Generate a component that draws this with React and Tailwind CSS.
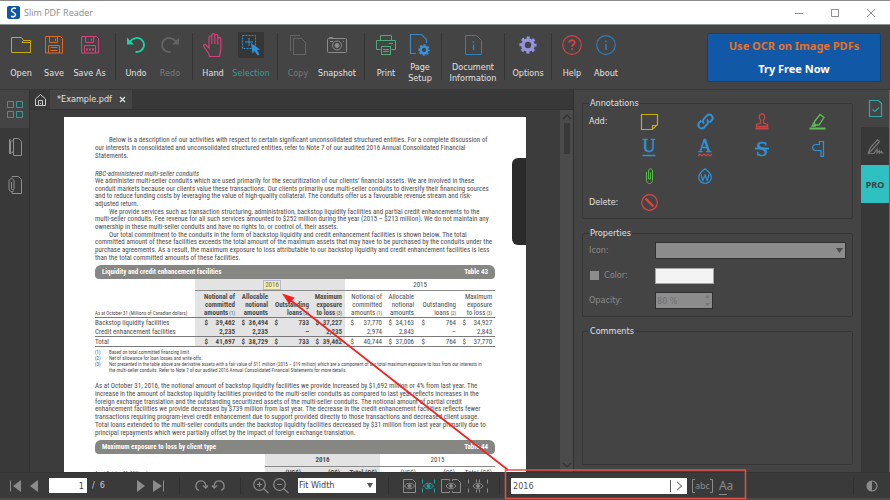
import clsx from 'clsx';

function Icon({ w, h, className, children }) {
  return (
    <svg width={w} height={h} viewBox={`0 0 ${w} ${h}`} fill="none" stroke="currentColor" aria-hidden="true" className={clsx('shrink-0 overflow-visible', className)}>
      {children}
    </svg>
  );
}

const Folder = () => (
  <Icon w={20} h={16} className="text-[#c4ac18]">
    <path d="M.5.5h10l2 3h7v12H.5zM12.5 3.5l-1.500 2h8" />
  </Icon>
);

const Floppy = ({ dots, className }) => (
  <Icon w={18} h={18} className={className}>
    <path d="M.5.5h15l2 2v14.500h-17z" />
    <path d="M4.500.5v6h8v-6M10.500 2.500v2.500" />
    <path d="M3.500 17V9.500h11V17" />
    {dots ? <path d="M5 13.500h8" strokeWidth="2" strokeDasharray="2 1" /> : <path d="M5.500 11.500h7M5.500 14.500h7" />}
  </Icon>
);

const Undo = () => (
  <Icon w={20} h={18} className="text-[#18d3a2]">
    <path d="M4 5.500C7 1.500 12.500.8 15.800 3.800c3.500 3.300 2.800 9.200-1.800 11.400-1.500.7-3 .9-4.500.8" strokeWidth="1.800" />
    <path d="M1 1.500v7h7z" fill="currentColor" stroke="none" />
  </Icon>
);

const Redo = () => (
  <Icon w={20} h={18} className="text-[#646464]">
    <path d="M16 5.500C13 1.500 7.500.8 4.200 3.800.7 7.100 1.400 13 6 15.200c1.500.7 3 .9 4.500.8" strokeWidth="1.800" />
    <path d="M19 1.500v7h-7z" fill="currentColor" stroke="none" />
  </Icon>
);

const Hand = () => (
  <Icon w={20} h={24} className="text-[#d6407c]">
    <path d="M6.500 23.500c0-2-1-3.500-2.500-5.500L.8 13.300c-.8-1.500 1.200-2.500 2.400-1.200L6 15V4.500c0-2 2.800-2 2.800 0V11 2.300c0-2.200 3-2.200 3 0V11 3c0-2 3-2 3 0v8.500V5.800c0-2 3-2 3 0V16c0 3-1.300 4.500-1.300 7.500z" strokeWidth="1.200" />
  </Icon>
);

const Selection = () => (
  <Icon w={22} h={24} className="text-[#2f8fd6]">
    <rect x="2.500" y="2.500" width="13" height="13" strokeDasharray="2 1" />
    <path d="M9 5v8M5 9h8" />
    <path d="M11 10l1.500 10.500 2.300-2.300 2.700 4.300 2-1.200-2.500-4.300 3.200-.6z" fill="currentColor" stroke="none" />
  </Icon>
);

const Copy = () => (
  <Icon w={18} h={20} className="text-[#646464]">
    <path d="M1.500 16V.5h9.500M4.500 3.500h8l4 4v12h-12z" />
  </Icon>
);

const Camera = () => (
  <Icon w={20} h={16} className="text-[#8b8b8b]">
    <rect x=".5" y="1.500" width="19" height="14" rx="1" />
    <path d="M2.500 1V.5h3V1M3 4.500h3M16 4.500h1" />
    <circle cx="10" cy="8.500" r="4.500" />
    <circle cx="10" cy="8.500" r="2" fill="currentColor" />
  </Icon>
);

const Printer = () => (
  <Icon w={20} h={20} className="text-[#4faa7d]">
    <path d="M4.500 5V.5h11V5M4.500 14.500h-4v-9h19v9h-4" />
    <rect x="5.500" y="11.500" width="9" height="8" />
    <path d="M7 14.500h6M7 16.500h6M13 8.500h4" />
  </Icon>
);

const Gear = ({ size, className }) => (
  <svg width={size} height={size} viewBox="0 0 18 18" fill="none" stroke="currentColor" aria-hidden="true" className={className}>
    <circle cx="9" cy="9" r="5" strokeWidth="3.600" />
    <circle cx="9" cy="9" r="7.300" strokeWidth="2.600" strokeDasharray="3.100 2.633" strokeDashoffset="1.500" />
  </svg>
);

const PageSetup = () => (
  <span className="relative block h-[22px] w-5">
    <Icon w={20} h={22} className="text-[#3f86bf]">
      <path d="M6 19.500H.5V.5h11l5 5V9" strokeWidth="1.200" />
    </Icon>
    <Gear size={12} className="absolute right-0 bottom-0 text-[#3a92dc]" />
  </span>
);

const DocInfo = () => (
  <Icon w={17} h={20} className="text-[#2d7fbd]">
    <path d="M.5.5h11l5 5v14H.5z" />
    <path d="M8.500 6v2M8.500 9.500V15" strokeWidth="1.500" />
  </Icon>
);

const Help = () => (
  <Icon w={20} h={20} className="text-[#d34545]">
    <circle cx="10" cy="10" r="9.300" strokeWidth="1.200" />
    <path d="M7.300 7.800C7.300 4 13 4.300 12.700 7.800c-.2 1.800-2.600 1.800-2.600 4M10.100 13.300v1.700" strokeWidth="1.800" />
  </Icon>
);

const About = () => (
  <Icon w={20} h={20} className="text-[#2d7fbd]">
    <circle cx="10" cy="10" r="9.300" strokeWidth="1.200" />
    <path d="M10 5.500v1.800M10 8.800V15" strokeWidth="1.500" />
  </Icon>
);

const toolGroups = [
  [
    { label: 'Open', icon: <Folder />, width: 'w-[38px]' },
    { label: 'Save', icon: <Floppy className="text-[#e0691c]" />, width: 'w-7' },
    { label: 'Save As', icon: <Floppy dots className="text-[#d6407c]" />, width: 'w-[43px]' },
  ],
  [
    { label: 'Undo', icon: <Undo />, width: 'w-8' },
    { label: 'Redo', icon: <Redo />, width: 'w-9', disabled: true },
  ],
  [
    { label: 'Hand', icon: <Hand />, width: 'w-8' },
    { label: 'Selection', icon: <Selection />, width: 'w-11', active: true },
  ],
  [
    { label: 'Copy', icon: <Copy />, width: 'w-8', disabled: true },
    { label: 'Snapshot', icon: <Camera />, width: 'w-[46px]' },
  ],
  [
    { label: 'Print', icon: <Printer />, width: 'w-[34px]' },
    { label: 'Page Setup', icon: <PageSetup />, width: 'w-[34px]' },
  ],
  [{ label: 'Document Information', icon: <DocInfo />, width: 'w-[54px]' }],
  [{ label: 'Options', icon: <Gear size={18} className="text-[#9792e0]" />, width: 'w-[38px]' }],
  [
    { label: 'Help', icon: <Help />, width: 'w-8' },
    { label: 'About', icon: <About />, width: 'w-9' },
  ],
];

function TitleBar() {
  return (
    <header className="flex h-[25px] shrink-0 items-center border-t border-b border-t-[#8a8a8a] border-b-[#8d9592] bg-white pl-[7px]">
      <span className="flex h-[13px] w-[13px] items-center justify-center rounded-xs bg-[#0f56a4] text-white">
        <Icon w={7} h={11}>
          <path d="M6 1.500C3.500.5 1.500 1.500 1.500 3.300c0 2.200 4 2 4 4.400 0 1.800-2 2.600-4.500 1.600" strokeWidth="1.500" />
        </Icon>
      </span>
      <h1 className="ml-1 font-['Open_Sans',sans-serif] text-[9px] text-[#8c8c8c]">Slim PDF Reader</h1>
      <div className="mr-px ml-auto flex text-[#8f8f8f]">
        <button aria-label="Minimize" className="flex h-5 w-9 items-center justify-center"><Icon w={8} h={8}><path d="M0 4.500h8" /></Icon></button>
        <button aria-label="Maximize" className="flex h-5 w-9 items-center justify-center"><Icon w={8} h={8}><path d="M.5.5h7v7h-7z" /></Icon></button>
        <button aria-label="Close" className="flex h-5 w-9 items-center justify-center"><Icon w={8} h={8}><path d="M0 0l8 8M8 0L0 8" /></Icon></button>
      </div>
    </header>
  );
}

function ToolButton({ label, icon, width, active, disabled }) {
  return (
    <button
      disabled={disabled}
      className={clsx('flex shrink-0 flex-col items-center', width, active ? 'text-[#2aa198]' : disabled ? 'text-[#7b7b7b]' : 'text-[#e2e2e2]')}
    >
      <span className={clsx('flex h-[26px] w-[26px] items-center justify-center', active && 'bg-[#363636]')}>{icon}</span>
      <span className="mt-1 flex h-[22px] items-center justify-center text-center leading-[11px]">{label}</span>
    </button>
  );
}

function Toolbar() {
  return (
    <div className="flex h-[65px] shrink-0 items-start border-b border-[#373737] bg-[#444] pt-[7px] pr-[9px] pl-[2px]">
      {toolGroups.map((group, i) => (
        <div key={group[0].label} className="flex">
          {i > 0 && <span className="mx-1 mt-px h-[47px] w-px bg-[#343434]" />}
          {group.map(t => <ToolButton key={t.label} {...t} />)}
        </div>
      ))}
      <a href="#ocr" className="mt-px ml-auto flex h-[49px] w-[174px] flex-col items-center justify-between rounded-xs border border-[#1c3f6b] bg-[#1159a7] py-1.5 font-['Noto_Sans',sans-serif] text-[11px] leading-[12px] font-bold">
        <span className="text-[#ea701a]">Use OCR on Image PDFs</span>
        <span className="text-white">Try Free Now</span>
      </a>
    </div>
  );
}

function LeftBar() {
  return (
    <nav className="flex w-[30px] shrink-0 flex-col border-r border-[#303030] bg-[#393939] text-[#8e8e8e]">
      <button aria-label="Thumbnails" className="flex h-[38px] items-center justify-center bg-[#444] text-[#2aa198]">
        <Icon w={16} h={17}>
          <path d="M.5.5h6v6h-6zM9.500.5h6v6h-6zM.5 10.500h6v6h-6zM9.500 10.500h6v6h-6z" />
        </Icon>
      </button>
      <button aria-label="Bookmarks" className="flex h-[38px] items-center justify-center">
        <Icon w={14} h={18}>
          <path d="M3 15.500H1.500V1.500h1M5.500.5h5l3 3v14h-8zM5.500 3h-3v12.500l3-2" />
        </Icon>
      </button>
      <button aria-label="Attachments" className="flex h-[38px] items-center justify-center">
        <Icon w={14} h={18}>
          <path d="M4 1.500V.5h6.500l3 3v14H4V16" />
          <path d="M3.500 6v6.500c0 1.800 2.500 1.800 2.500 0V5c0-3-5-3-5 0v8c0 3 4 3 5 1.500" />
        </Icon>
      </button>
    </nav>
  );
}

function TabStrip() {
  return (
    <div className="flex h-5 shrink-0 items-stretch border-b border-[#323232] bg-[#383838]">
      <button aria-label="Home" className="flex w-5 items-center justify-center text-[#c9c9c9]">
        <Icon w={11} h={12}>
          <path d="M.5 11.500V5l5-4.500 5 4.500v6.500zM3.500 11.500v-5h4v5M5 9.500h1" />
        </Icon>
      </button>
      <div className="flex w-[82px] items-center justify-between bg-[#444] pr-[7px] pl-[7px] text-[#e2e2e2]">
        <span>*Example.pdf</span>
        <button aria-label="Close tab" className="flex">
          <Icon w={5} h={5}><path d="M0 0l5 5M5 0L0 5" strokeWidth="1.200" /></Icon>
        </button>
      </div>
    </div>
  );
}

const intro = [
  'Below is a description of our activities with respect to certain significant unconsolidated structured entities. For a complete discussion of',
  'our interests in consolidated and unconsolidated structured entities, refer to Note 7 of our audited 2016 Annual Consolidated Financial',
  'Statements.',
];

const conduits = [
  'We administer multi-seller conduits which are used primarily for the securitization of our clients’ financial assets. We are involved in these',
  'conduit markets because our clients value these transactions. Our clients primarily use multi-seller conduits to diversify their financing sources',
  'and to reduce funding costs by leveraging the value of high-quality collateral. The conduits offer us a favourable revenue stream and risk-',
  'adjusted return.',
  'We provide services such as transaction structuring, administration, backstop liquidity facilities and partial credit enhancements to the',
  'multi-seller conduits. Fee revenue for all such services amounted to $252 million during the year (2015 – $213 million). We do not maintain any',
  'ownership in these multi-seller conduits and have no rights to, or control of, their assets.',
  'Our total commitment to the conduits in the form of backstop liquidity and credit enhancement facilities is shown below. The total',
  'committed amount of these facilities exceeds the total amount of the maximum assets that may have to be purchased by the conduits under the',
  'purchase agreements. As a result, the maximum exposure to loss attributable to our backstop liquidity and credit enhancement facilities is less',
  'than the total committed amounts of these facilities.',
];

const changes = [
  'As at October 31, 2016, the notional amount of backstop liquidity facilities we provide increased by $1,692 million or 4% from last year. The',
  'increase in the amount of backstop liquidity facilities provided to the multi-seller conduits as compared to last year reflects increases in the',
  'foreign exchange translation and the outstanding securitized assets of the multi-seller conduits. The notional amount of partial credit',
  'enhancement facilities we provide decreased by $739 million from last year. The decrease in the credit enhancement facilities reflects fewer',
  'transactions requiring program-level credit enhancement due to support provided directly to those transactions and decreased client usage.',
  'Total loans extended to the multi-seller conduits under the backstop liquidity facilities decreased by $31 million from last year primarily due to',
  'principal repayments which were partially offset by the impact of foreign exchange translation.',
];

const facilityRows = [
  { name: 'Backstop liquidity facilities', values: ['$', '39,462', '$', '36,494', '$', '733', '$', '37,227', '$', '37,770', '$', '34,163', '$', '764', '$', '34,927'] },
  { name: 'Credit enhancement facilities', values: ['', '2,235', '', '2,235', '', '–', '', '2,235', '', '2,974', '', '2,843', '', '–', '', '2,843'] },
  { name: 'Total', total: true, values: ['$', '41,697', '$', '38,729', '$', '733', '$', '39,462', '$', '40,744', '$', '37,006', '$', '764', '$', '37,770'] },
];

const facilityHeads = [
  ['Notional of', 'committed', 'amounts', '(1)'],
  ['Allocable', 'notional', 'amounts'],
  ['', 'Outstanding', 'loans', '(2)'],
  ['Maximum', 'exposure', 'to loss', '(3)'],
];

function Caption({ title, number }) {
  return (
    <div className="flex h-[14px] items-center justify-between rounded-tl-md rounded-tr-md rounded-br-sm rounded-bl-sm bg-[#868683] px-[7px] font-bold text-white">
      <span>{title}</span>
      <span>{number}</span>
    </div>
  );
}

function Lines({ lines, indents = [] }) {
  return lines.map((line, i) => (
    <span key={line} className={clsx('flex items-center leading-[7px]', indents.includes(i) && 'pl-[14px]')}>{line}</span>
  ));
}

function FacilitiesTable() {
  return (
    <table className="w-full table-fixed border-separate border-spacing-0 leading-[8px] whitespace-nowrap [&_td]:p-0 [&_th]:p-0">
      <colgroup>
        <col className="w-[100px]" />
        <col className="w-[13px]" /><col className="w-[27px]" />
        <col className="w-[10px]" /><col className="w-[23px]" />
        <col className="w-[10px]" /><col className="w-[31px]" />
        <col className="w-[10px]" /><col className="w-[26px]" />
        <col className="w-[9px]" /><col className="w-[28px]" />
        <col className="w-[10px]" /><col className="w-[22px]" />
        <col className="w-[11px]" /><col className="w-[31px]" />
        <col className="w-[10px]" /><col className="w-[29px]" />
      </colgroup>
      <thead>
        <tr className="h-3">
          <td />
          <th colSpan={8} className="border-b border-[#8a8a8a] bg-[#e3e3e3] font-normal">
            <span className="ml-1 inline-block bg-[#f1edb4] px-px text-[#77743c] outline outline-[#b9b6dd]">2016</span>
          </th>
          <th colSpan={8} className="border-b border-[#8a8a8a] font-normal">2015</th>
        </tr>
        <tr className="h-[27px] align-bottom">
          <th className="border-b border-[#7a7a7a] text-left text-[5px] font-normal">As at October 31 (Millions of Canadian dollars)</th>
          {[true, false].map(current => facilityHeads.map(([a, b, c, note], i) => (
            <th key={c} colSpan={2} className={clsx('border-b border-[#7a7a7a] text-right', current ? 'bg-[#e3e3e3] font-bold' : 'font-normal')}>
              <div className={clsx(i === 3 && 'pr-[3px]')}>
                {a}<br />{b}<br />{c}{note && <span className="text-[5px] font-normal"> {note}</span>}
              </div>
            </th>
          )))}
        </tr>
      </thead>
      <tbody>
        {facilityRows.map(row => (
          <tr key={row.name} className={row.total ? 'h-[11px]' : 'h-[9px]'}>
            <td className={clsx(row.total && 'border-t border-b border-[#7a7a7a]')}>{row.name}</td>
            {row.values.map((v, i) => (
              <td
                key={i}
                className={clsx('text-right', i < 8 && 'bg-[#e3e3e3] font-bold', row.total && 'border-t border-b border-[#7a7a7a]')}
              >
                <div className={clsx(i % 8 === 7 && 'pr-[3px]')}>{v}</div>
              </td>
            ))}
          </tr>
        ))}
      </tbody>
    </table>
  );
}

function ClientTable() {
  return (
    <table className="w-full table-fixed border-separate border-spacing-0 leading-[8px] whitespace-nowrap [&_td]:p-0 [&_th]:p-0">
      <colgroup>
        <col className="w-[170px]" />
        <col className="w-[39px]" /><col className="w-[39px]" /><col className="w-[37px]" />
        <col className="w-[39px]" /><col className="w-[39px]" /><col className="w-[37px]" />
      </colgroup>
      <thead>
        <tr className="h-[13px]">
          <td />
          <th colSpan={3} className="border-b border-[#8a8a8a] bg-[#e3e3e3] font-bold">2016</th>
          <th colSpan={3} className="border-b border-[#8a8a8a] font-normal">2015</th>
        </tr>
        <tr className="h-3">
          <th className="text-left text-[5px] font-normal">As at October 31 (Millions)</th>
          {['(US$)', '(C$)', 'Total (C$)'].map(h => <th key={h} className="bg-[#e3e3e3] text-right font-bold"><div className="pr-[3px]">{h}</div></th>)}
          {['(US$)', '(C$)', 'Total (C$)'].map(h => <th key={h} className="text-right font-normal"><div className="pr-[3px]">{h}</div></th>)}
        </tr>
      </thead>
    </table>
  );
}

const footnotes = [
  ['(1)', 'Based on total committed financing limit.'],
  ['(2)', 'Net of allowance for loan losses and write-offs.'],
  ['(3)', 'Not presented in the table above are derivative assets with a fair value of $11 million (2015 – $19 million) which are a component of our total maximum exposure to loss from our interests in'],
  ['', 'the multi-seller conduits. Refer to Note 7 of our audited 2016 Annual Consolidated Financial Statements for more details.'],
];

function PdfPage() {
  return (
    <article className="relative w-[462px] shrink-0 overflow-hidden bg-white pt-5 pl-[31px] font-['Roboto_Condensed',Roboto,sans-serif] text-[7px] whitespace-nowrap text-[#4c4c4c]">
      <div className="w-[400px]">
        <p className="grid h-[23px] auto-rows-fr"><Lines lines={intro} indents={[0]} /></p>
        <section className="mt-2.5 grid h-[92px] auto-rows-fr">
          <h2 className="leading-[8px] italic">RBC-administered multi-seller conduits</h2>
          <Lines lines={conduits} indents={[4, 7]} />
        </section>
        <div className="mt-[3px]">
          <Caption title="Liquidity and credit enhancement facilities" number="Table 43" />
          <FacilitiesTable />
        </div>
        <ul className="mt-0.5 text-[5px] leading-[6px]">
          {footnotes.map(([mark, text]) => (
            <li key={text} className="flex"><span className="w-[14px] shrink-0">{mark}</span>{text}</li>
          ))}
        </ul>
        <p className="mt-2.5 grid h-[54px] auto-rows-fr"><Lines lines={changes} /></p>
        <div className="mt-[3px]">
          <Caption title="Maximum exposure to loss by client type" number="Table 44" />
          <ClientTable />
        </div>
      </div>
      <span className="absolute top-[41px] right-0 h-[87px] w-[14px] rounded-l-md bg-[#2b2b2b]" />
    </article>
  );
}

function DocumentView() {
  return (
    <section className="flex w-[543px] shrink-0 flex-col">
      <TabStrip />
      <div className="flex min-h-0 flex-1 bg-[#3c3c3c]">
        <div className="flex min-w-0 flex-1 overflow-hidden pt-[7px] pl-[34px]"><PdfPage /></div>
        <div className="flex w-[13px] flex-col items-center bg-[#4b4b4b] py-1 text-[#333]">
          <Icon w={8} h={5}><path d="M0 5l4-4 4 4" strokeWidth="1.500" /></Icon>
          <span className="mt-1 h-[31px] w-[6px] bg-[#383838]" />
          <Icon w={8} h={5} className="mt-auto"><path d="M0 0l4 4 4-4" strokeWidth="1.500" /></Icon>
        </div>
      </div>
    </section>
  );
}

const blue = 'text-[#2f93da]';

const annotationTools = [
  { label: 'Note', icon: <Icon w={17} h={16} className="text-[#c9ae10]"><path d="M.5.5h16v10l-5 5H.5zM11.500 15.500v-4h5" strokeWidth="1.200" /></Icon> },
  {
    label: 'Link',
    icon: (
      <Icon w={17} h={17} className={blue}>
        <path d="M7 10.500a3.400 3.400 0 0 1 0-4.800l3-3.200a3.400 3.400 0 0 1 4.800 4.800L12.500 9.500M10 6.500a3.400 3.400 0 0 1 0 4.800l-3 3.200a3.400 3.400 0 0 1-4.800-4.800L4.500 7.500" strokeWidth="1.900" />
      </Icon>
    ),
  },
  {
    label: 'Stamp',
    icon: (
      <Icon w={14} h={17} className="text-[#c94646]">
        <path d="M5.500 10V7C3.500 5 3.800.8 7 .8S10.500 5 8.500 7v3l4 1.500v2h-11v-2z" strokeWidth="1.300" />
        <path d="M.5 15.500h13" strokeWidth="2" />
      </Icon>
    ),
  },
  {
    label: 'Highlight',
    icon: (
      <Icon w={17} h={17} className="text-[#5fbe55]">
        <path d="M5.500 8.500L11 1.500 15 4.500 10 12H5.500zM5 9.500L3 13h4" strokeWidth="1.300" />
        <path d="M.5 15.500h16" strokeWidth="2" />
      </Icon>
    ),
  },
  {
    label: 'Underline',
    icon: (
      <Icon w={14} h={17} className={blue}>
        <text x="7" y="12" textAnchor="middle" fill="currentColor" strokeWidth=".5" className="font-['Liberation_Serif',serif] text-[18px]">U</text>
        <path d="M.5 15.500h13" strokeWidth="1.500" />
      </Icon>
    ),
  },
  {
    label: 'Squiggly',
    icon: (
      <Icon w={14} h={17} className={blue}>
        <text x="7" y="12" textAnchor="middle" fill="currentColor" strokeWidth=".5" className="font-['Liberation_Serif',serif] text-[18px]">A</text>
        <path d="M0 16l2-2 2 2 2-2 2 2 2-2 2 2 2-2" strokeWidth="1.200" className="stroke-[#c94646]" />
      </Icon>
    ),
  },
  {
    label: 'Strikeout',
    icon: (
      <Icon w={14} h={17} className={blue}>
        <text x="7" y="16" textAnchor="middle" fill="currentColor" strokeWidth=".5" className="font-['Liberation_Serif',serif] text-[22px]">S</text>
        <path d="M0 8.500h14" strokeWidth="1.800" />
      </Icon>
    ),
  },
  { label: 'Paragraph', icon: <Icon w={12} h={16} className={blue}><path d="M11.500.5v15h-2.500V9.500H4c-4.500 0-4.500-6 0-6h3.500V.5z" strokeWidth="1.200" /></Icon> },
  { label: 'Attach', icon: <Icon w={7} h={16} className="text-[#58b94c]"><path d="M4.500 4.500v6.500h-2V3c0-3 4-3 4 0v9.500c0 4-6 4-6 0V4" /></Icon> },
  {
    label: 'Watermark',
    icon: (
      <Icon w={14} h={16} className={blue}>
        <path d="M7 .8c3 2.200 6.300 4.700 6.300 8.200 0 8.400-12.600 8.400-12.600 0C.7 5.500 4 3 7 .8z" strokeWidth="1.200" />
        <path d="M3 6.500l1.800 6L7 7l2.200 5.500 1.800-6" strokeWidth="1.200" />
      </Icon>
    ),
  },
];

function Group({ title, className, children }) {
  return (
    <fieldset className={clsx('min-w-0 rounded-xs border border-[#363636] px-1.5', className)}>
      <legend className="px-px leading-[10px]">{title}</legend>
      {children}
    </fieldset>
  );
}

function AnnotationPanel() {
  return (
    <aside className="flex min-w-0 flex-1 flex-col gap-[9px] border-l border-[#303030] bg-[#444] px-2 pt-2 pb-[7px] text-[#e0e0e0]">
      <Group title="Annotations" className="pb-0.5">
        <div className="grid auto-rows-[27px] grid-cols-[32px_repeat(4,1fr)] items-center">
          <span>Add:</span>
          {annotationTools.map((t, i) => (
            <button key={t.label} aria-label={t.label} className={clsx('flex justify-center', i % 4 === 0 && 'col-start-2')}>{t.icon}</button>
          ))}
          <span className="col-start-1">Delete:</span>
          <button aria-label="Delete" className="flex justify-center">
            <Icon w={17} h={17} className="text-[#d84848]">
              <circle cx="8.500" cy="8.500" r="7.800" strokeWidth="1.200" />
              <path d="M4.500 4.500l8 8" strokeWidth="2.400" />
            </Icon>
          </button>
        </div>
      </Group>

      <Group title="Properties" className="pb-[3px]">
        <div className="grid auto-rows-[25px] grid-cols-[66px_1fr] items-center text-[#8b8b8b]">
          <label htmlFor="icon">Icon:</label>
          <div className="relative">
            <select id="icon" disabled className="block h-[17px] w-full appearance-none border border-[#303030] bg-[#8c8c8c]" />
            <Icon w={7} h={5} className="absolute top-[6px] right-[3px] text-[#4a4a4a]"><path d="M0 0h7L3.500 5z" fill="currentColor" stroke="none" /></Icon>
          </div>
          <label className="flex items-center gap-[5px]">
            <input type="checkbox" disabled className="ml-px h-[9px] w-[9px] appearance-none bg-[#8c8c8c]" />
            Color:
          </label>
          <button aria-label="Pick color" disabled className="h-4 w-[59px] border border-[#a5a5a5] bg-[#f3f3f3]" />
          <label htmlFor="opacity">Opacity:</label>
          <div className="relative w-[58px]">
            <input id="opacity" disabled defaultValue="80 %" className="block h-[17px] w-full border border-[#303030] bg-[#8c8c8c] px-px text-[#6f6f6f]" />
            <Icon w={5} h={11} className="absolute top-[3px] right-[3px] text-[#777]">
              <path d="M0 3l2.500-3L5 3zM0 8h5l-2.500 3z" fill="currentColor" stroke="none" />
            </Icon>
          </div>
        </div>
      </Group>

      <Group title="Comments" className="flex-1" />
    </aside>
  );
}

function RightBar() {
  return (
    <nav className="flex w-[29px] shrink-0 flex-col border-r border-[#6a6a6a] bg-[#383838]">
      <button aria-label="Annotations" className="flex h-[37px] items-center justify-center bg-[#444] text-[#2fa8a4]">
        <Icon w={13} h={17}><path d="M.5.5h9l3 3v13H.5zM3.500 9.500l2.500 2 4-4" strokeWidth="1.200" /></Icon>
      </button>
      <button aria-label="Sign" className="flex h-[38px] items-center justify-center text-[#777]">
        <Icon w={17} h={15}>
          <path d="M1 14.500L3.500 8.500 10.500.8l2 1.700-7 8zM1 14.500h6l3-4.500v4l2.500-2.500v2.500l2-1.500.5 1.500h1.500" strokeWidth="1.200" />
        </Icon>
      </button>
      <button className="h-[38px] bg-[#2fc0c1] font-['Noto_Sans',sans-serif] text-[9px] font-bold text-[#3a4646]">PRO</button>
    </nav>
  );
}

const Eye = ({ x }) => (
  <>
    <path d={`M${x} 8c2.500-3.700 7.500-3.700 10 0-2.500 3.700-7.500 3.700-10 0z`} />
    <circle cx={x + 5} cy="8" r="1.500" fill="currentColor" />
  </>
);

function BarButton({ label, width, className, children }) {
  return <button aria-label={label} className={clsx('flex h-4 shrink-0 items-center justify-center', width, className)}>{children}</button>;
}

const BarSeparator = () => <span className="h-[18px] w-px shrink-0 bg-[#2f2f2f]" />;

function StatusBar() {
  return (
    <footer className="flex h-7 shrink-0 items-center border-t border-b-2 border-t-[#333] border-b-[#4d4a4a] bg-[#3a3a3a] pl-1.5 text-[#8b8b8b]">
      <BarButton label="First page" width="w-5"><Icon w={12} h={12}><path d="M.5.5v11" /><path d="M11 0v12L3 6z" fill="currentColor" stroke="none" /></Icon></BarButton>
      <BarButton label="Previous page" width="w-4"><Icon w={8} h={12}><path d="M8 0v12L0 6z" fill="currentColor" stroke="none" /></Icon></BarButton>
      <input aria-label="Page" defaultValue="1" className="ml-[7px] h-[15px] w-[38px] bg-white pr-[3px] text-right text-[#444]" />
      <span className="ml-[5px] w-[39px] shrink-0 text-[#ccc]">/&nbsp; 6</span>
      <BarButton label="Next page" width="w-5"><Icon w={8} h={12}><path d="M0 0v12l8-6z" fill="currentColor" stroke="none" /></Icon></BarButton>
      <BarButton label="Last page" width="w-4"><Icon w={12} h={12}><path d="M10.500.5v11" /><path d="M0 0v12l9-6z" fill="currentColor" stroke="none" /></Icon></BarButton>
      <span className="w-3" />
      <BarSeparator />
      <BarButton label="Rotate clockwise" width="w-[18px]" className="ml-3">
        <Icon w={12} h={11}><path d="M4 10.500C-1 8.500.5.8 6 .8c3 0 4.800 2.200 4.800 5.700M8 5.500l2.800 2.500L13 5.500" strokeWidth="1.300" /></Icon>
      </BarButton>
      <BarButton label="Rotate counterclockwise" width="w-[18px]">
        <Icon w={12} h={11}><path d="M8 10.500C13 8.500 11.500.8 6 .8 3 .8 1.200 3 1.200 6.500M-1 5.500L1.200 8 4 5.500" strokeWidth="1.300" /></Icon>
      </BarButton>
      <span className="w-3" />
      <BarSeparator />
      <BarButton label="Zoom in" width="w-5" className="ml-2.5">
        <Icon w={16} h={15}><circle cx="6.500" cy="6.500" r="5.800" strokeWidth="1.200" /><path d="M10.500 10.500l5 4.500M6.500 4v5M4 6.500h5" strokeWidth="1.200" /></Icon>
      </BarButton>
      <BarButton label="Zoom out" width="w-5">
        <Icon w={16} h={15}><circle cx="6.500" cy="6.500" r="5.800" strokeWidth="1.200" /><path d="M10.500 10.500l5 4.500M4 6.500h5" strokeWidth="1.200" /></Icon>
      </BarButton>
      <div className="relative ml-[7px] shrink-0">
        <select aria-label="Zoom" className="block h-[15px] w-[78px] appearance-none bg-white pl-px text-[#444]"><option>Fit Width</option></select>
        <Icon w={6} h={5} className="pointer-events-none absolute top-[5px] right-[3px] text-[#555]"><path d="M0 0h6L3 5z" fill="currentColor" stroke="none" /></Icon>
      </div>
      <span className="w-3" />
      <BarSeparator />
      <BarButton label="Single page" width="w-5" className="ml-2.5"><Icon w={13} h={16}><path d="M.5 1.500h9l3 3v10H.5z" /><Eye x={1.5} /></Icon></BarButton>
      <BarButton label="Continuous" width="w-[19px]" className="text-[#23a3a3]"><Icon w={13} h={16}><path d="M.5 1.500v4M.5 10.500v4M12.500 1.500v4M12.500 10.500v4" /><Eye x={1.5} /></Icon></BarButton>
      <BarButton label="Facing pages" width="w-[26px]"><Icon w={20} h={16}><path d="M8.500 3V1.500h-8v13h8V13M11.500 3V1.500h5l3 3v10h-8V13" /><Eye x={5} /></Icon></BarButton>
      <BarButton label="Continuous facing" width="w-7"><Icon w={20} h={16}><path d="M.5 1.500v4M.5 10.500v4M19.500 1.500v4M19.500 10.500v4M8.500 1.500v3M11.500 1.500v3M8.500 11.500v3M11.500 11.500v3" /><Eye x={5} /></Icon></BarButton>
      <span className="w-[7px]" />
      <BarSeparator />
      <div className="ml-[11px] flex h-4 w-44 shrink-0 items-center bg-white">
        <input aria-label="Find" defaultValue="2016" className="h-4 w-[159px] bg-transparent pl-0.5 text-[#555]" />
        <span className="h-3 w-px bg-[#555]" />
        <BarButton label="Find next" width="w-4"><Icon w={5} h={8}><path d="M0 0l4.500 4L0 8" strokeWidth="1.200" /></Icon></BarButton>
      </div>
      <button aria-label="Whole word" className="ml-[5px] flex h-3.5 shrink-0 items-center">
        <Icon w={3} h={14}><path d="M3 .5H.5v13H3" /></Icon>
        <span className="font-['Noto_Sans',sans-serif] text-[9px] leading-[12px]">abc</span>
        <Icon w={3} h={14}><path d="M0 .5h2.500v13H0" /></Icon>
      </button>
      <button aria-label="Match case" className="ml-1.5 shrink-0 font-['Noto_Sans',sans-serif] text-[12px] leading-[14px]"><span className="border-b border-current">A</span>a</button>
      <span className="ml-auto" />
      <BarSeparator />
      <BarButton label="Contrast" width="w-9">
        <Icon w={12} h={12}><circle cx="6" cy="6" r="5" strokeWidth="1.200" /><path d="M6 1a5 5 0 0 0 0 10z" fill="currentColor" stroke="none" /></Icon>
      </BarButton>
    </footer>
  );
}

/* Red frame round the search box, with an arrow up to the first hit on the page */
function Callout() {
  return (
    <svg width="750" height="210" viewBox="0 0 750 210" fill="none" aria-hidden="true" className="pointer-events-none absolute bottom-0 left-0">
      <path d="M508 180L289 9" stroke="#f5201d" strokeWidth="1.600" />
      <path d="M282 3.500l12.500 4-5.500 6.500z" fill="#f5201d" />
      <rect x="505.500" y="180" width="240" height="28.500" stroke="#e2524b" strokeWidth="1.500" />
    </svg>
  );
}

export default function App() {
  return (
    <div className="relative flex h-screen flex-col overflow-hidden bg-[#444] font-['DejaVu_Sans_Condensed','DejaVu_Sans',sans-serif] text-[9px] leading-[11px]">
      <TitleBar />
      <Toolbar />
      <main className="flex min-h-0 flex-1">
        <LeftBar />
        <DocumentView />
        <AnnotationPanel />
        <RightBar />
      </main>
      <StatusBar />
      <Callout />
    </div>
  );
}
